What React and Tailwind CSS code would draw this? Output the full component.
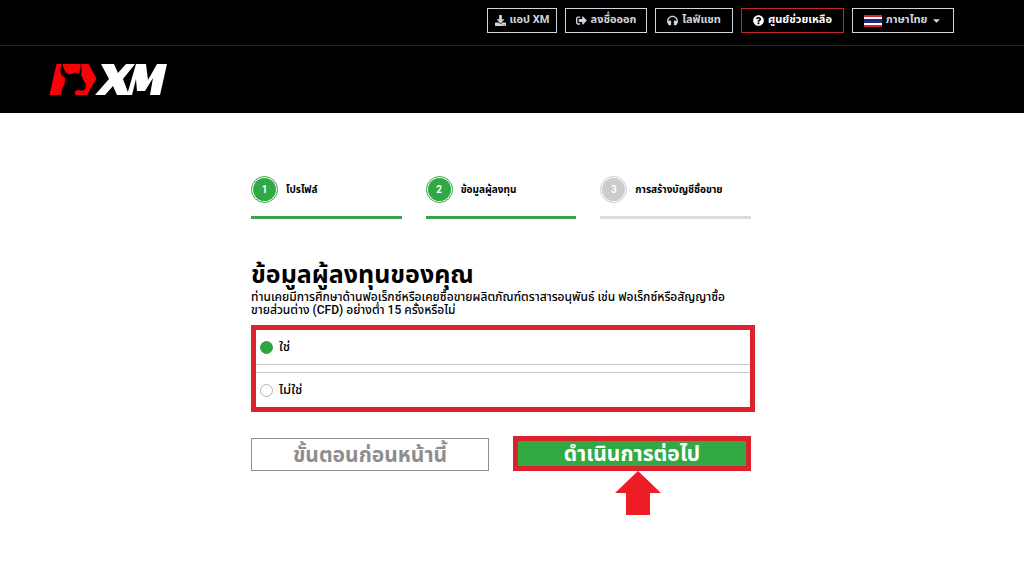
import React, { useState } from "react";
import { FaDownload, FaSignOutAlt, FaHeadphones, FaQuestionCircle, FaCaretDown } from "react-icons/fa";

const topLinks = [
    { label: "แอป XM", icon: FaDownload, style: "w-[70px] border-gray-300 text-gray-300" },
    { label: "ลงชื่อออก", icon: FaSignOutAlt, style: "w-[82px] border-gray-300 text-gray-300" },
    { label: "ไลฟ์แชท", icon: FaHeadphones, style: "w-[78px] border-gray-300 text-gray-300" },
    { label: "ศูนย์ช่วยเหลือ", icon: FaQuestionCircle, style: "w-[103px] border-[#c4242c] text-white" },
];

const steps = [
    { label: "โปรไฟล์", done: true },
    { label: "ข้อมูลผู้ลงทุน", done: true },
    { label: "การสร้างบัญชีซื้อขาย", done: false },
];

const options = [
    { value: "yes", label: "ใช่" },
    { value: "no", label: "ไม่ใช่" },
];

const Logo = () => (
    <svg viewBox="0 0 118 34" className="w-[118px] h-[34px]" role="img" aria-label="XM">
        <path fill="#fb0007" d="M7.5 1h32l8 14.5L38 32H.5z" />
        {/* bull head with both horns */}
        <path
            fill="#000"
            d="M13.5 0c-2.5 4-3 9-.5 12.5.8 1 2 1.8 3.3 2.2-.6 1.6-.3 3.3-.5 5C15.500 22 13.500 24 13 26.500L11.500 33H27l-1.500-4 3.500-2.500c1.500 1 4 1.800 6 .5 1-.7 1.500-1.500 1.500-2.500l.3-3.200-2-3.300-1.500-4-1.300-1.500c.8-3.500.9-8-.3-12.500 0 4-.5 8-1.900 10.500l-4-.7-5.500 1.700c-3.800-1.500-6.300-5.500-6.800-12z"
        />
        <path fill="#fff" d="M52 1h13l4 9 8-9h9L74 16l6 16H68l-4-9-8 9H46l14-16z" />
        <path fill="#fff" d="M87 1h10l2 16 9-16h10l-7 31H101l3-17-8 13H88l-1-12-4 16h-5z" />
    </svg>
);

const Flag = () => (
    <svg viewBox="0 0 18 12" className="w-[18px] h-3 shrink-0" aria-hidden="true">
        <path fill="#d8232f" d="M0 0h18v12H0z" />
        <path fill="#fff" d="M0 2h18v8H0z" />
        <path fill="#24287c" d="M0 4h18v4H0z" />
    </svg>
);

const Header = () => (
    <header className="bg-black">
        <nav className="flex justify-end gap-2 h-[46px] pt-2 pr-[70px] border-b border-[#222]">
            {topLinks.map(({ label, icon: Icon, style }) => (
                <a
                    key={label}
                    href="#"
                    className={`flex items-center justify-center gap-1 h-[25px] border text-[11px] font-bold whitespace-nowrap ${style}`}
                >
                    <Icon className="shrink-0" />
                    {label}
                </a>
            ))}
            <button
                type="button"
                className="flex items-center justify-center gap-1 w-[102px] h-[25px] border border-gray-300 text-gray-300 text-[11px] font-bold whitespace-nowrap"
            >
                <Flag />
                ภาษาไทย
                <FaCaretDown className="shrink-0" />
            </button>
        </nav>
        <div className="flex items-center h-[67px] pl-[49px]">
            <a href="#">
                <Logo />
            </a>
        </div>
    </header>
);

const Steps = () => (
    <ol className="grid grid-cols-3 gap-6">
        {steps.map((step, index) => (
            <li
                key={step.label}
                className={`flex items-center gap-2 h-[44px] pb-3 border-b-3 ${step.done ? "border-[#3fa34d]" : "border-[#dcdcdc]"}`}
            >
                <span className={`flex shrink-0 w-[27px] h-[27px] p-px border rounded-full ${step.done ? "border-[#31a843]" : "border-[#cbcbcb]"}`}>
                    <span
                        className={`flex flex-1 items-center justify-center rounded-full text-[10px] font-bold text-white ${step.done ? "bg-[#31a843]" : "bg-[#cbcbcb]"}`}
                    >
                        {index + 1}
                    </span>
                </span>
                <span className="text-[10px] font-bold whitespace-nowrap">{step.label}</span>
            </li>
        ))}
    </ol>
);

const App = () => {
    const [answer, setAnswer] = useState("yes");

    return (
        <div className="min-h-screen bg-white text-black font-[Roboto,'Noto_Sans_Thai','Noto_Sans',sans-serif]">
            <Header />
            <main className="pt-[62px] pr-[22px]">
                <div className="w-full max-w-[500px] mx-auto">
                    <Steps />
                    <h1 className="mt-10 text-[25px] leading-8 font-bold">ข้อมูลผู้ลงทุนของคุณ</h1>
                    <p className="text-xs leading-[13px] font-medium">
                        ท่านเคยมีการศึกษาด้านฟอเร็กซ์หรือเคยซื้อขายผลิตภัณฑ์ตราสารอนุพันธ์ เช่น ฟอเร็กซ์หรือสัญญาซื้อ
                        <br />
                        ขายส่วนต่าง (CFD) อย่างต่ำ 15 ครั้งหรือไม่
                    </p>
                    <div className="flex flex-col gap-[7px] mt-2 -mr-1 border-5 border-[#dc222d]">
                        {options.map((option) => (
                            <label
                                key={option.value}
                                className="flex items-center gap-1.5 h-[35px] px-1 text-[13px] font-medium first:border-b last:border-t border-[#c8c8c8]"
                            >
                                <input
                                    type="radio"
                                    name="experience"
                                    className="appearance-none w-[13px] h-[13px] border border-[#b5b5b5] rounded-full checked:bg-[#2ba640] checked:border-[#2ba640]"
                                    checked={answer === option.value}
                                    onChange={() => setAnswer(option.value)}
                                />
                                {option.label}
                            </label>
                        ))}
                    </div>
                    <div className="grid grid-cols-2 items-end gap-6 mt-6 text-[21px] leading-6 font-bold">
                        <button type="button" className="flex items-center justify-center h-[33px] border border-[#8e8e8e] text-[#8e8e8e]">
                            ขั้นตอนก่อนหน้านี้
                        </button>
                        <div className="relative">
                            <button
                                type="button"
                                className="flex items-center justify-center w-full h-[35px] border-5 border-[#dc222d] bg-[#33a944] text-white"
                            >
                                ดำเนินการต่อไป
                            </button>
                            <svg viewBox="0 0 46 44" className="absolute top-full left-[102px] w-[46px] h-11" aria-hidden="true">
                                <path fill="#ee1c25" d="M23 0l23 22H35v22H11V22H0z" />
                            </svg>
                        </div>
                    </div>
                </div>
            </main>
        </div>
    );
};

export default App;
